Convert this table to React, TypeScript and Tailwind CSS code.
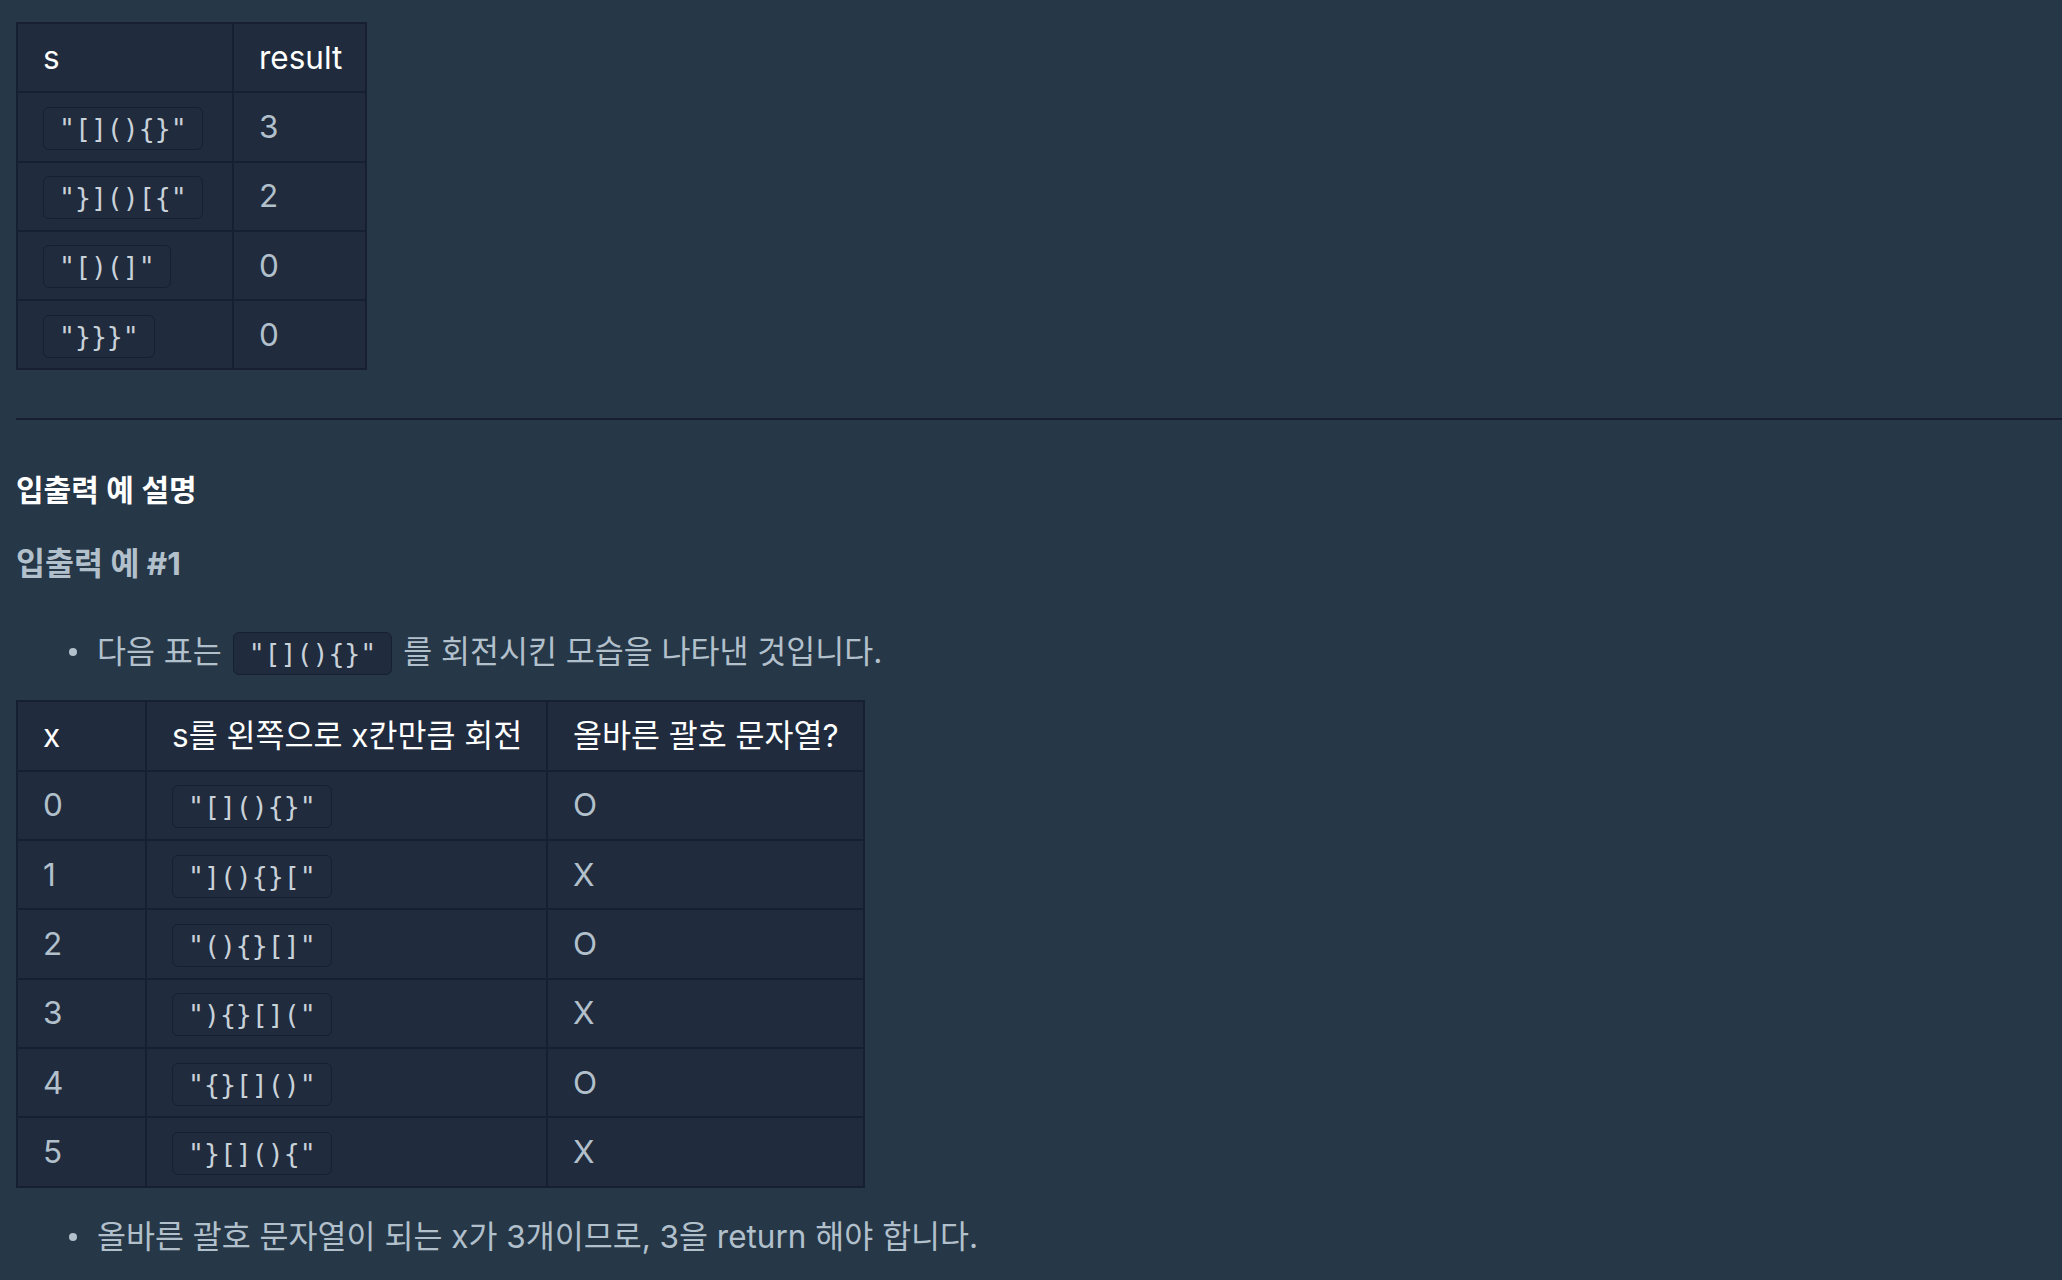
import type { ReactNode } from "react";

const examples = [
  { s: '"[](){}"', result: "3" },
  { s: '"}]()[{"', result: "2" },
  { s: '"[)(]"', result: "0" },
  { s: '"}}}"', result: "0" },
];

const rotations = [
  { x: "0", rotated: '"[](){}"', ok: "O" },
  { x: "1", rotated: '"](){}["', ok: "X" },
  { x: "2", rotated: '"(){}[]"', ok: "O" },
  { x: "3", rotated: '"){}[]("', ok: "X" },
  { x: "4", rotated: '"{}[]()"', ok: "O" },
  { x: "5", rotated: '"}[](){"', ok: "X" },
];

function Code({ children }: { children: ReactNode }) {
  return (
    <code className="inline-block h-[43px] rounded-[6px] border border-[#172030] bg-[#202b3d] px-[15px] align-middle font-['DejaVu_Sans_Mono',monospace] text-[26.5px] leading-[41px] text-[#c9d1d9] whitespace-pre">
      {children}
    </code>
  );
}

const th = "h-[69.3px] whitespace-nowrap border-2 border-[#172030] px-[25px] text-left align-middle font-normal text-white";
const td = "h-[69.3px] whitespace-nowrap border-2 border-[#172030] px-[25px] align-middle text-[#b2c0cc]";

function Bullet({ children, className }: { children: ReactNode; className?: string }) {
  return (
    <li className={`flex h-[44px] items-center ${className ?? ""}`}>
      <span className="ml-[53px] mr-[20px] h-[8px] w-[8px] shrink-0 rounded-full bg-[#b2c0cc]" />
      <span className="whitespace-nowrap">{children}</span>
    </li>
  );
}

export default function App() {
  return (
    <div className="min-h-screen bg-[#263747] pl-4 pt-[22px] font-[Inter,'Noto_Sans_CJK_KR',sans-serif] text-[31.5px] leading-[44px] text-[#b2c0cc]">
      <table className="w-[349px] table-fixed border-collapse bg-[#202b3d]">
        <colgroup>
          <col className="w-[216px]" />
          <col className="w-[133px]" />
        </colgroup>
        <thead>
          <tr>
            <th className={th}>s</th>
            <th className={th}>result</th>
          </tr>
        </thead>
        <tbody>
          {examples.map((row) => (
            <tr key={row.s}>
              <td className={td}>
                <Code>{row.s}</Code>
              </td>
              <td className={td}>{row.result}</td>
            </tr>
          ))}
        </tbody>
      </table>

      <hr className="mt-[48px] h-[2px] border-0 bg-[#172030]" />

      <h5 className="mt-[50px] text-[30px] font-semibold leading-[40px] text-white">입출력 예 설명</h5>
      <h6 className="mt-[34px] text-[31.5px] font-bold leading-[40px] text-[#b2c0cc]">입출력 예 #1</h6>

      <ul className="mt-[46px]">
        <Bullet>
          다음 표는 <span className="mx-[2px]"><Code>{'"[](){}"'}</Code></span> 를 회전시킨 모습을 나타낸 것입니다.
        </Bullet>
      </ul>

      <table className="mt-[26px] w-[847px] table-fixed border-collapse bg-[#202b3d]">
        <colgroup>
          <col className="w-[129px]" />
          <col className="w-[401px]" />
          <col className="w-[317px]" />
        </colgroup>
        <thead>
          <tr>
            <th className={th}>x</th>
            <th className={th}>s를 왼쪽으로 x칸만큼 회전</th>
            <th className={th}>올바른 괄호 문자열?</th>
          </tr>
        </thead>
        <tbody>
          {rotations.map((row) => (
            <tr key={row.x}>
              <td className={td}>{row.x}</td>
              <td className={td}>
                <Code>{row.rotated}</Code>
              </td>
              <td className={td}>{row.ok}</td>
            </tr>
          ))}
        </tbody>
      </table>

      <ul className="mt-[27px]">
        <Bullet>올바른 괄호 문자열이 되는 x가 3개이므로, 3을 return 해야 합니다.</Bullet>
      </ul>
    </div>
  );
}
